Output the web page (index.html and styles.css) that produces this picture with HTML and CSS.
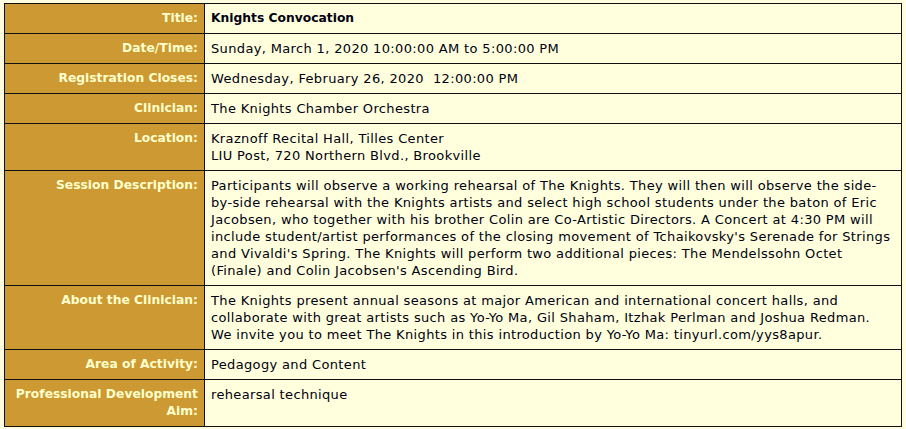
FILE: index.html
```html
<!DOCTYPE html>
<html>
<head>
<meta charset="utf-8">
<link rel="stylesheet" href="styles.css">
</head>
<body>
<table class="info">
  <tr><th>Title:</th><td class="title">Knights Convocation</td></tr>
  <tr><th>Date/Time:</th><td>Sunday, March 1, 2020 10:00:00 AM to 5:00:00 PM</td></tr>
  <tr><th>Registration Closes:</th><td>Wednesday, February 26, 2020&nbsp; 12:00:00 PM</td></tr>
  <tr><th>Clinician:</th><td>The Knights Chamber Orchestra</td></tr>
  <tr><th>Location:</th><td>Kraznoff Recital Hall, Tilles Center<br>LIU Post, 720 Northern Blvd., Brookville</td></tr>
  <tr><th>Session Description:</th><td>Participants will observe a working rehearsal of The Knights. They will then will observe the side-<br>by-side rehearsal with the Knights artists and select high school students under the baton of Eric<br>Jacobsen, who together with his brother Colin are Co-Artistic Directors. A Concert at 4:30 PM will<br>include student/artist performances of the closing movement of Tchaikovsky's Serenade for Strings<br>and Vivaldi's Spring. The Knights will perform two additional pieces: The Mendelssohn Octet<br>(Finale) and Colin Jacobsen's Ascending Bird.</td></tr>
  <tr><th>About the Clinician:</th><td>The Knights present annual seasons at major American and international concert halls, and<br>collaborate with great artists such as Yo-Yo Ma, Gil Shaham, Itzhak Perlman and Joshua Redman.<br>We invite you to meet The Knights in this introduction by Yo-Yo Ma: tinyurl.com/yys8apur.</td></tr>
  <tr><th>Area of Activity:</th><td>Pedagogy and Content</td></tr>
  <tr><th>Professional Development Aim:</th><td>rehearsal technique</td></tr>
</table>
</body>
</html>
```
FILE: styles.css
```css
html, body {
  margin: 0;
  padding: 0;
  background: #ffffe0;
}
body {
  padding: 3px 0 0 4px;
}
.info {
  border-collapse: collapse;
  width: 898px;
  table-layout: fixed;
  border: 1px solid #111;
  font-family: "DejaVu Sans", sans-serif;
  font-size: 13px;
  line-height: 17px;
  letter-spacing: 0.35px;
}
.info th, .info td {
  border: 1px solid #111;
  padding: 6px 6px;
  vertical-align: top;
}
.info th {
  width: 187px;
  background: #cc9933;
  color: #ffffcc;
  text-align: right;
  font-weight: bold;
  font-size: 12.3px;
  letter-spacing: 0;
}
.info td {
  background: #ffffdd;
  color: #000011;
  text-align: left;
  white-space: nowrap;
  overflow: hidden;
}
.info td.title {
  font-weight: bold;
  font-size: 12.3px;
  letter-spacing: 0;
}
```
